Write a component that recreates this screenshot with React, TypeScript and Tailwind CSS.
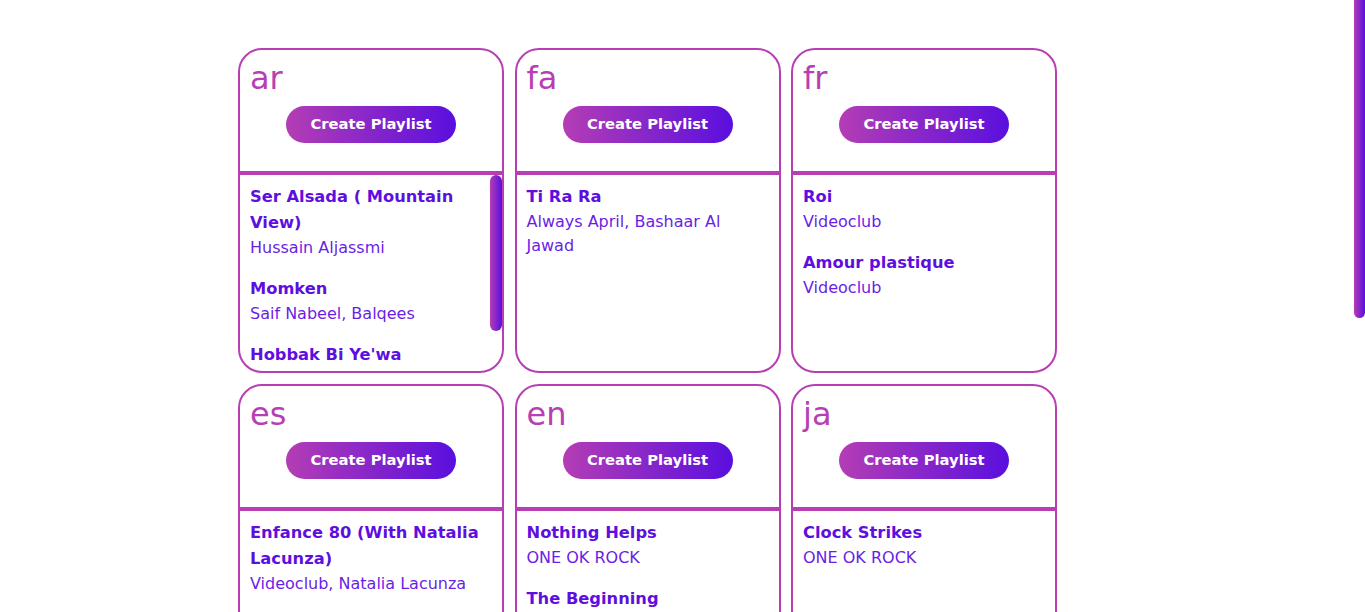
import React from 'react';

type Song = { title: string; artists: string };
type Lang = { code: string; songs: Song[]; scroll?: boolean };

const langs: Lang[] = [
  {
    code: 'ar',
    scroll: true,
    songs: [
      { title: 'Ser Alsada ( Mountain View)', artists: 'Hussain Aljassmi' },
      { title: 'Momken', artists: 'Saif Nabeel, Balqees' },
      { title: "Hobbak Bi Ye'wa", artists: 'Ragheb Alama' },
    ],
  },
  { code: 'fa', songs: [{ title: 'Ti Ra Ra', artists: 'Always April, Bashaar Al Jawad' }] },
  {
    code: 'fr',
    songs: [
      { title: 'Roi', artists: 'Videoclub' },
      { title: 'Amour plastique', artists: 'Videoclub' },
    ],
  },
  {
    code: 'es',
    songs: [{ title: 'Enfance 80 (With Natalia Lacunza)', artists: 'Videoclub, Natalia Lacunza' }],
  },
  {
    code: 'en',
    songs: [
      { title: 'Nothing Helps', artists: 'ONE OK ROCK' },
      { title: 'The Beginning', artists: 'ONE OK ROCK' },
    ],
  },
  { code: 'ja', songs: [{ title: 'Clock Strikes', artists: 'ONE OK ROCK' }] },
  { code: 'de', songs: [{ title: 'Tage wie diese', artists: 'Die Toten Hosen' }] },
  { code: 'it', songs: [{ title: 'Soldi', artists: 'Mahmood' }] },
  { code: 'ko', songs: [{ title: 'Dynamite', artists: 'BTS' }] },
];

const gradient = 'bg-[linear-gradient(to_right,#b43db4,#5a0fdf)]';

function LangCard({ lang }: { lang: Lang }) {
  return (
    <div className="w-[266px] h-[325px] border-2 border-[#b73fb3] rounded-[24px] flex flex-col overflow-hidden">
      <div className="h-[121px] shrink-0 px-[10px] pt-[10px] flex flex-col">
        <span className="text-[32px] leading-[36px] text-[#b73fb3]">{lang.code}</span>
        <button
          className={`self-center mt-[10px] w-[170px] h-[37px] rounded-full ${gradient} text-white text-[14.75px] font-bold`}
        >
          Create Playlist
        </button>
      </div>
      <div className="h-[4px] shrink-0 bg-[#b73fb3]" />
      <div className="relative flex-1 overflow-hidden">
        <div className="pl-[10px] pr-[12px] pt-[9px]">
          {lang.songs.map((s) => (
            <div key={s.title} className="mb-[16px] text-[#5e0fdf]">
              <p className="text-[16.3px] leading-[26px] font-bold">{s.title}</p>
              <p className="text-[16px] leading-[24px] font-normal text-[#6a1ee6]">{s.artists}</p>
            </div>
          ))}
        </div>
        {lang.scroll && (
          <div className={`absolute top-0 right-0 w-[12px] h-[156px] rounded-full ${gradient}`} />
        )}
      </div>
    </div>
  );
}

export default function App() {
  return (
    <div className="min-h-screen bg-white" style={{ fontFamily: '"DejaVu Sans", "Open Sans", sans-serif' }}>
      <div className="pl-[238px] pt-[48px] pb-[133px]">
        <div className="grid grid-cols-[repeat(3,266px)] gap-x-[10.5px] gap-y-[11px]">
          {langs.map((l) => (
            <LangCard key={l.code} lang={l} />
          ))}
        </div>
      </div>
      {/* page scrollbar thumb */}
      <div className={`fixed top-0 right-0 w-[11px] h-[318px] rounded-b-[6px] ${gradient}`} />
    </div>
  );
}
